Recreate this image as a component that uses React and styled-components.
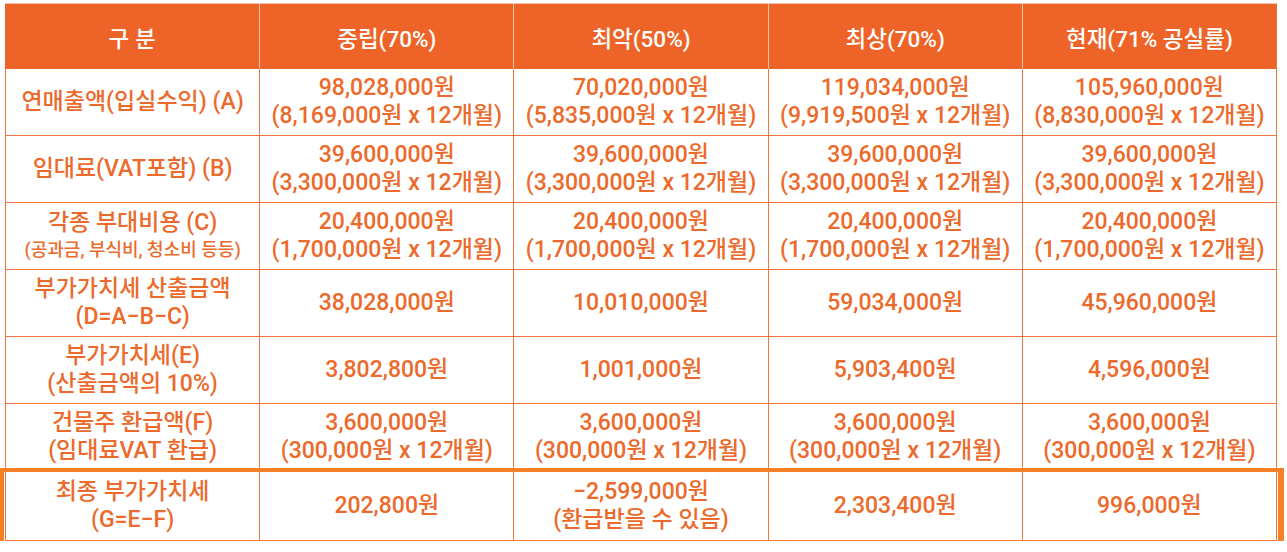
import React from 'react';
import styled, { createGlobalStyle } from 'styled-components';

const GlobalStyle = createGlobalStyle`
  html, body {
    margin: 0;
    padding: 0;
    background: #ffffff;
  }
  body {
    font-family: Roboto, 'Noto Sans CJK KR', sans-serif;
  }
`;

const ORANGE = '#ec6a2b';
const LINE = '#ef7440';

const Page = styled.div`
  padding: 3px 0 0 5px;
  width: 1272px;
`;

const Table = styled.div`
  display: flex;
  flex-direction: column;
  border-left: 1px solid ${LINE};
`;

const Row = styled.div`
  position: relative;
  display: grid;
  grid-template-columns: repeat(5, 1fr);
  height: ${(props) => props.h || 67}px;

  ${(props) =>
    props.highlight &&
    `
    &::after {
      content: '';
      position: absolute;
      left: -6px;
      right: -7px;
      top: -3px;
      bottom: -7px;
      border: 4px solid #f58026;
      border-right-width: 6px;
      pointer-events: none;
    }
  `}
`;

const HeadCell = styled.div`
  display: flex;
  align-items: center;
  justify-content: center;
  background: #ee6428;
  color: #ffffff;
  font-size: 22.5px;
  font-weight: 500;
  border-right: 1px solid #f6c4a8;
  border-top: 1px solid #f6c4a8;
  margin-left: ${(props) => (props.first ? '-1px' : '0')};

  &:last-child {
    border-right: 1px solid ${LINE};
  }
`;

const Cell = styled.div`
  display: flex;
  flex-direction: column;
  align-items: center;
  justify-content: center;
  color: ${ORANGE};
  font-size: 23px;
  font-weight: 500;
  line-height: 28px;
  text-align: center;
  white-space: nowrap;
  border-right: 1px solid ${LINE};
  border-bottom: 1px solid ${LINE};
`;

const Small = styled.span`
  font-size: 18px;
  line-height: 26px;
`;

const heads = ['구 분', '중립(70%)', '최악(50%)', '최상(70%)', '현재(71% 공실률)'];

const rows = [
  {
    label: ['연매출액(입실수익) (A)'],
    values: [
      ['98,028,000원', '(8,169,000원 x 12개월)'],
      ['70,020,000원', '(5,835,000원 x 12개월)'],
      ['119,034,000원', '(9,919,500원 x 12개월)'],
      ['105,960,000원', '(8,830,000원 x 12개월)'],
    ],
  },
  {
    label: ['임대료(VAT포함) (B)'],
    values: [
      ['39,600,000원', '(3,300,000원 x 12개월)'],
      ['39,600,000원', '(3,300,000원 x 12개월)'],
      ['39,600,000원', '(3,300,000원 x 12개월)'],
      ['39,600,000원', '(3,300,000원 x 12개월)'],
    ],
  },
  {
    label: ['각종 부대비용 (C)'],
    note: '(공과금, 부식비, 청소비 등등)',
    values: [
      ['20,400,000원', '(1,700,000원 x 12개월)'],
      ['20,400,000원', '(1,700,000원 x 12개월)'],
      ['20,400,000원', '(1,700,000원 x 12개월)'],
      ['20,400,000원', '(1,700,000원 x 12개월)'],
    ],
  },
  {
    label: ['부가가치세 산출금액', '(D=A−B−C)'],
    values: [['38,028,000원'], ['10,010,000원'], ['59,034,000원'], ['45,960,000원']],
  },
  {
    label: ['부가가치세(E)', '(산출금액의 10%)'],
    values: [['3,802,800원'], ['1,001,000원'], ['5,903,400원'], ['4,596,000원']],
  },
  {
    label: ['건물주 환급액(F)', '(임대료VAT 환급)'],
    values: [
      ['3,600,000원', '(300,000원 x 12개월)'],
      ['3,600,000원', '(300,000원 x 12개월)'],
      ['3,600,000원', '(300,000원 x 12개월)'],
      ['3,600,000원', '(300,000원 x 12개월)'],
    ],
  },
  {
    label: ['최종 부가가치세', '(G=E−F)'],
    values: [['202,800원'], ['−2,599,000원', '(환급받을 수 있음)'], ['2,303,400원'], ['996,000원']],
    highlight: true,
    h: 70,
  },
];

function Lines({ lines }) {
  return lines.map((line) => <span key={line}>{line}</span>);
}

export default function App() {
  return (
    <Page>
      <GlobalStyle />
      <Table>
        <Row h={66}>
          {heads.map((h, i) => (
            <HeadCell key={h} first={i === 0}>
              {h}
            </HeadCell>
          ))}
        </Row>
        {rows.map((row) => (
          <Row key={row.label[0]} highlight={row.highlight} h={row.h}>
            <Cell>
              <Lines lines={row.label} />
              {row.note && <Small>{row.note}</Small>}
            </Cell>
            {row.values.map((v, i) => (
              <Cell key={i}>
                <Lines lines={v} />
              </Cell>
            ))}
          </Row>
        ))}
      </Table>
    </Page>
  );
}
